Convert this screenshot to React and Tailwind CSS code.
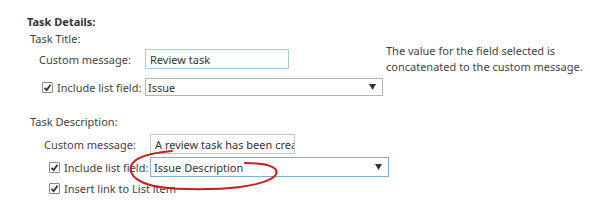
import React from 'react';

const Check = () => (
  <span className="inline-flex items-center justify-center w-[11px] h-[11px] border border-[#8a8a8a] bg-white rounded-[1px] mr-[4px] shrink-0">
    <svg width="9" height="9" viewBox="0 0 9 9">
      <path d="M1.5 4.8 L3.6 7 L7.6 1.8" fill="none" stroke="#333" strokeWidth="1.8" />
    </svg>
  </span>
);

const Caret = () => (
  <svg width="7" height="6" viewBox="0 0 7 6" className="mr-[6px]">
    <path d="M0 0 H7 L3.5 6 Z" fill="#333" />
  </svg>
);

const App = () => {
  return (
    <div
      className="relative w-[590px] h-[202px] bg-white text-[#444] text-[11px] leading-[15px] overflow-hidden whitespace-nowrap"
      style={{ fontFamily: '"Noto Sans", "Open Sans", sans-serif' }}
    >
      <div className="pl-[27px] pt-[14px]">
        <div className="font-bold text-[#333]">Task Details:</div>
        <div className="pl-[3px] mt-[2px]">Task Title:</div>

        <div className="flex">
          <div>
            <div className="flex items-center mt-[3px] pl-[12px]">
              <span className="w-[106px]">Custom message:</span>
              <div className="w-[144px] h-[20px] border border-[#a9c9e6] flex items-center pl-[4px] text-[#333]">
                Review task
              </div>
            </div>
            <div className="flex items-center mt-[9px] pl-[15px]">
              <Check />
              <span className="w-[88px]">Include list field:</span>
              <div className="w-[238px] h-[18px] border border-[#b4b4b4] flex items-center justify-between pl-[2px] text-[#333]">
                <span>Issue</span>
                <Caret />
              </div>
            </div>
          </div>
          <div className="ml-[3px] -mt-[3px] leading-[16px]">
            The value for the field selected is
            <br />
            concatenated to the custom message.
          </div>
        </div>

        <div className="pl-[3px] mt-[18px]">Task Description:</div>
        <div className="flex items-center mt-[5px] pl-[17px]">
          <span className="w-[106px]">Custom message:</span>
          <div className="w-[145px] h-[20px] border border-[#c8c8c8] flex items-center pl-[4px] text-[#333] overflow-hidden">
            A review task has been created
          </div>
        </div>
        <div className="flex items-center mt-[3px] pl-[22px]">
          <Check />
          <span className="w-[86px]">Include list field:</span>
          <div className="w-[239px] h-[20px] border border-[#7aaedc] flex items-center justify-between pl-[3px] text-[#333]">
            <span>Issue Description</span>
            <Caret />
          </div>
        </div>
        <div className="flex items-center mt-[4px] pl-[22px]">
          <Check />
          <span>Insert link to List item</span>
        </div>
      </div>

      <svg className="absolute left-0 top-0 pointer-events-none" width="590" height="202">
        <path
          d="M245 163 C258 163, 272 164, 276 170 C280 178, 262 184, 240 187 C215 190, 180 190, 160 187 C140 184, 128 176, 131 166 C134 158, 148 153, 172 151"
          fill="none"
          stroke="#c81e1e"
          strokeWidth="2"
          strokeLinecap="round"
          strokeLinejoin="round"
        />
      </svg>
    </div>
  );
};

export default App;
